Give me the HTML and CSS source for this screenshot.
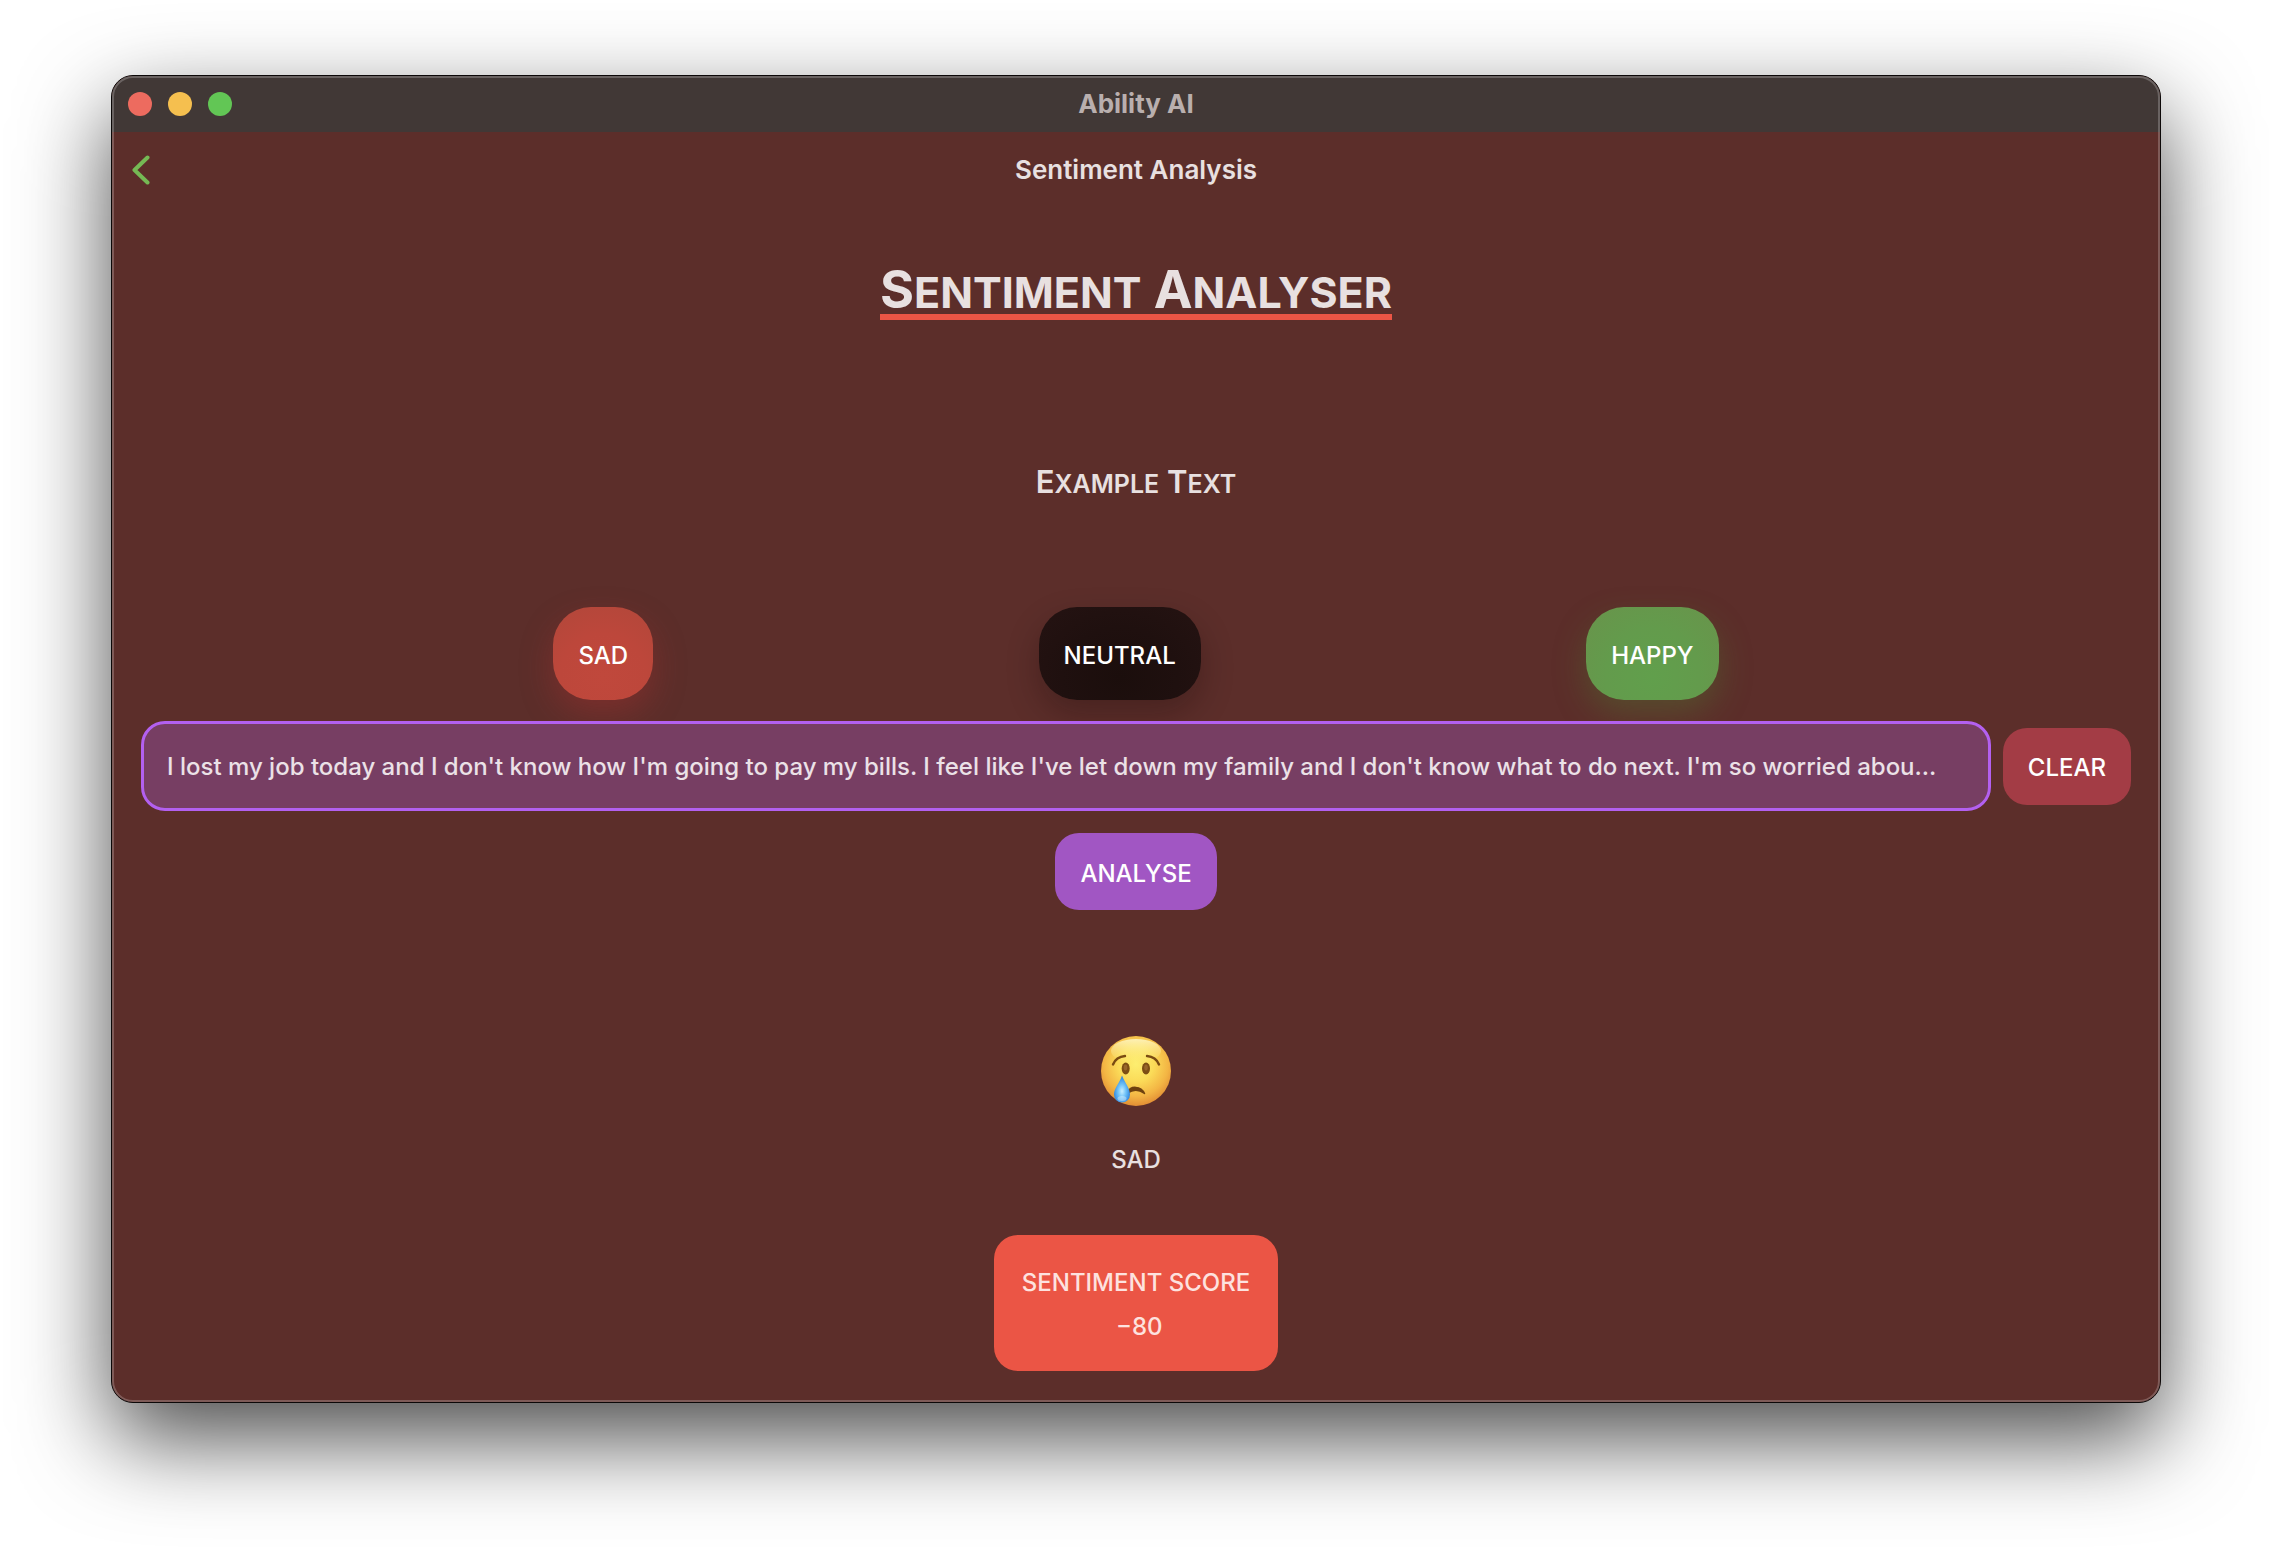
FILE: index.html
```html
<!DOCTYPE html>
<html lang="en">
<head>
<meta charset="utf-8">
<title>Ability AI</title>
<link rel="stylesheet" href="styles.css">
</head>
<body>
<div class="window">
  <header class="titlebar">
    <div class="lights">
      <button class="light light-close" aria-label="Close"></button>
      <button class="light light-minimise" aria-label="Minimise"></button>
      <button class="light light-zoom" aria-label="Zoom"></button>
    </div>
    <span class="app-name">Ability AI</span>
  </header>
  <nav class="navbar">
    <a class="back" href="#" aria-label="Back">
      <svg width="18" height="30" viewBox="0 0 18 30"><path d="M15.5 2.5 2.5 15l13 12.5" fill="none" stroke="#75b954" stroke-width="4" stroke-linecap="round" stroke-linejoin="round"/></svg>
    </a>
    <span class="nav-title">Sentiment Analysis</span>
  </nav>
  <main class="content">
    <h1 class="heading">S<span class="small">entiment</span> A<span class="small">nalyser</span></h1>
    <h2 class="subheading">E<span class="small">xample</span> T<span class="small">ext</span></h2>
    <div class="examples">
      <button class="button chip chip-sad">SAD</button>
      <button class="button chip chip-neutral">NEUTRAL</button>
      <button class="button chip chip-happy">HAPPY</button>
    </div>
    <form class="entry">
      <input class="field" type="text" aria-label="Text to analyse" value="I lost my job today and I don't know how I'm going to pay my bills. I feel like I've let down my family and I don't know what to do next. I'm so worried abou...">
      <button class="button clear" type="reset">CLEAR</button>
    </form>
    <button class="button analyse">ANALYSE</button>
    <svg class="emoji" width="70" height="70" viewBox="0 0 70 70" role="img" aria-label="Crying face">
      <defs>
        <radialGradient id="face" cx="50%" cy="40%" r="64%">
          <stop offset="0" stop-color="#fdee70"/><stop offset=".4" stop-color="#fbdb58"/><stop offset=".72" stop-color="#f3b544"/><stop offset="1" stop-color="#dd8330"/>
        </radialGradient>
        <linearGradient id="shine" x1="0" y1="0" x2="0" y2="1">
          <stop offset="0" stop-color="#fffbd0" stop-opacity=".8"/><stop offset="1" stop-color="#fff48a" stop-opacity="0"/>
        </linearGradient>
        <radialGradient id="tear" cx="50%" cy="58%" r="55%">
          <stop offset="0" stop-color="#c9efff"/><stop offset=".45" stop-color="#6fc2f8"/><stop offset="1" stop-color="#2a80dc"/>
        </radialGradient>
      </defs>
      <circle cx="35" cy="35" r="35" fill="url(#face)"/>
      <ellipse cx="35" cy="15" rx="25" ry="12" fill="url(#shine)"/>
      <ellipse cx="24.700" cy="32.500" rx="4" ry="6" fill="#7d4e14"/>
      <ellipse cx="45" cy="32.500" rx="4" ry="6" fill="#7d4e14"/>
      <ellipse cx="24.500" cy="31.500" rx="1.800" ry="3" fill="#98662a"/>
      <ellipse cx="45" cy="31.500" rx="1.800" ry="3" fill="#98662a"/>
      <path d="M12 28.500C14 23.500 18 20.500 24 20" fill="none" stroke="#7a4b12" stroke-width="2.400" stroke-linecap="round"/>
      <path d="M46 20c6 .5 10 3.500 12 8.500" fill="none" stroke="#7a4b12" stroke-width="2.400" stroke-linecap="round"/>
      <path d="M26.500 56.500C29 49.500 40 49.500 43.500 57.500 38 53.500 32 53.500 26.500 57Z" fill="#6f420f" stroke="#6f420f" stroke-width="1.500" stroke-linejoin="round"/>
      <path d="M21 39.500C24 47 29 52.500 29 58.500a8 8 0 0 1-16 0C13 52.500 18.500 47 21 39.500Z" fill="url(#tear)"/>
      <ellipse cx="21" cy="62.500" rx="4.500" ry="2.500" fill="#fff" opacity=".35"/>
    </svg>
    <p class="mood">SAD</p>
    <section class="score">
      <div>SENTIMENT SCORE</div>
      <div>&nbsp;−80</div>
    </section>
  </main>
</div>
</body>
</html>
```
FILE: styles.css
```css
* {
  box-sizing: border-box;
}

body {
  min-height: 100vh;
  margin: 0;
  padding: 75px 111px 146px;
  background: #fff;
  color: #e8e0e0;
  font: 500 24px/44px Inter, "Noto Sans", sans-serif;
}

.window {
  position: relative;
  border: 1px solid #0c0808;
  border-radius: 22px;
  background: #5c2e2a;
  box-shadow: 0 36px 90px rgba(0, 0, 0, .7);
}

/* light hairline just inside the window edge */
.window::after {
  content: "";
  position: absolute;
  inset: 0;
  border: 2px solid rgba(255, 255, 255, .22);
  border-radius: 21px;
  pointer-events: none;
}

.titlebar,
.navbar {
  display: grid;
  grid-template-columns: 1fr auto 1fr;
  align-items: center;
  padding: 0 16px;
}

.titlebar {
  height: 56px;
  border-radius: 21px 21px 0 0;
  background: #413836;
}

.lights {
  display: flex;
  gap: 16px;
}

.light {
  width: 24px;
  height: 24px;
  padding: 0;
  border: 0;
  border-radius: 50%;
}

.light-close { background: #ed6b5f; }
.light-minimise { background: #f5bf4f; }
.light-zoom { background: #62c655; }

.app-name {
  color: #b9afae;
  font-size: 26px;
  font-weight: 700;
}

.navbar {
  height: 76px;
}

.back {
  display: flex;
  padding-left: 4px;
}

.nav-title {
  font-size: 26px;
  font-weight: 600;
}

.content {
  display: flex;
  flex-direction: column;
  align-items: center;
  padding: 58px 29px 31px;
}

.heading,
.subheading {
  margin: 0;
}

.heading {
  border-bottom: 6px solid #eb5545;
  font-size: 52px;
  font-weight: 700;
  line-height: 48px;
}

.subheading {
  margin-top: 142px;
  font-size: 31px;
  font-weight: 600;
  line-height: 40px;
}

.small {
  line-height: 0;
  text-transform: uppercase;
}

.heading .small { font-size: 43px; }
.subheading .small { font-size: 25px; }

.examples {
  display: flex;
  justify-content: space-evenly;
  align-self: stretch;
  margin-top: 105px;
  padding: 0 27px;
}

.button {
  height: 77px;
  padding: 4px 25px 0;
  border: 0;
  border-radius: 24px;
  color: #fff;
  font: inherit;
}

.chip {
  height: 93px;
  border-radius: 38px;
}

.chip-sad {
  background: radial-gradient(circle at 50% 75%, #c0483c, #bd473b 50%, #b1473a);
  box-shadow: 0 14px 32px rgba(180, 50, 50, .35);
}

.chip-neutral {
  background: radial-gradient(ellipse at 50% 75%, #1b0e0c, #1f100f 50%, #251312);
  box-shadow: 0 14px 32px rgba(20, 8, 8, .28);
}

.chip-happy {
  background: radial-gradient(ellipse at 50% 75%, #619f4c, #639b4c 50%, #69934b);
  box-shadow: 0 14px 32px rgba(80, 120, 50, .4);
}

.entry {
  position: relative;
  display: flex;
  align-items: center;
  align-self: stretch;
  gap: 12px;
  margin-top: 21px;
}

.field {
  flex: 1;
  min-width: 0;
  height: 90px;
  padding: 0 23px;
  border: 3px solid #b360f0;
  border-radius: 24px;
  background: #773e63;
  color: #ebe1e7;
  font: inherit;
  text-overflow: ellipsis;
}

.clear {
  background: #a33c45;
}

.analyse {
  margin-top: 22px;
  background: #a156c3;
}

.emoji {
  display: block;
  margin-top: 126px;
}

.mood {
  margin: 32px 0 0;
}

.score {
  margin-top: 53px;
  padding: 26px 28px 22px;
  border-radius: 24px;
  background: #eb5545;
  color: #fde2df;
  text-align: center;
}
```
